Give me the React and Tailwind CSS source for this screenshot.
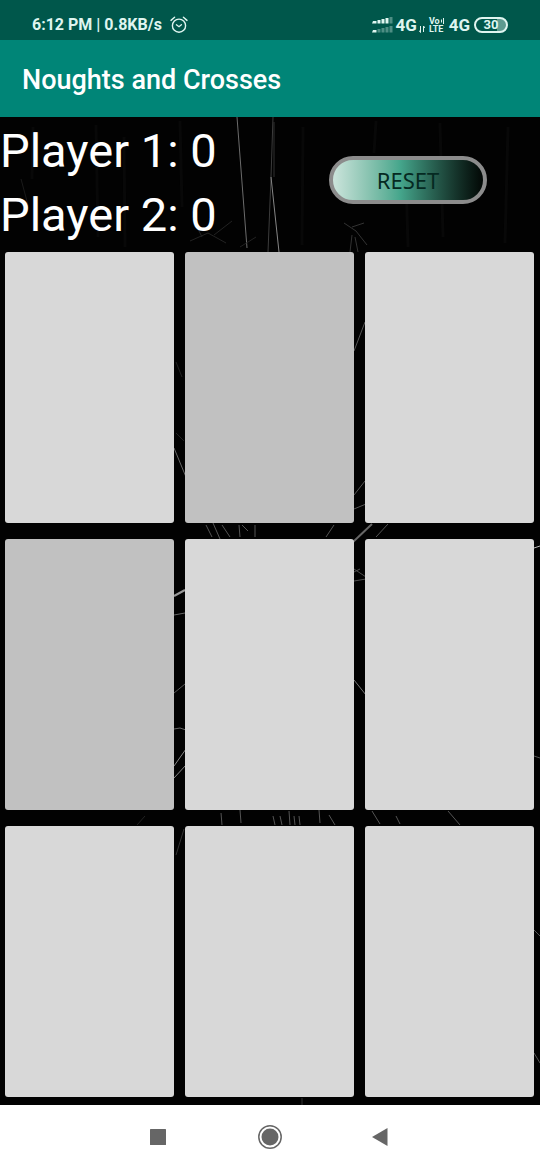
import React, { useState } from "react";

const BRANCHES = [
  ["M237 0 L247 131", "#6c6c6c", 1],
  ["M273 0 L271 60 L268 135", "#3c3c3c", 1],
  ["M271 60 L279 135", "#858585", 1],
  ["M274 5 L274 60", "#303030", 1],
  ["M344 106 L356 114 L367 128 M352 110 L364 106 M352 118 L350 135 M355 120 L358 135", "#333333", 1],
  ["M21 62 L28 88 L25 96", "#1a1a1a", 1],
  ["M190 124 L208 116 L226 126 M202 120 L196 108 M214 118 L232 104 M240 130 L256 120", "#222222", 1],
  ["M174 331 L186 360", "#666666", 1],
  ["M176 245 L182 260 M176 316 L184 324", "#222222", 1],
  ["M354 234 L365 205", "#555555", 1],
  ["M354 378 L365 364 M354 392 L366 387", "#555555", 1],
  ["M353 425 L372 407", "#666666", 2],
  ["M376 420 L388 407 M326 420 L334 408", "#555555", 1],
  ["M206 408 L212 420 M213 406 L220 422 M222 408 L230 420 M239 408 L240 420 M242 408 L248 414 M255 408 L255 420", "#555555", 1],
  ["M174 479 L185 473", "#999999", 2],
  ["M174 498 L185 496", "#666666", 1],
  ["M354 455 L360 452 M354 452 L366 460 M354 464 L366 462", "#505050", 1],
  ["M174 576 L185 567", "#555555", 1],
  ["M354 563 L366 578", "#777777", 1],
  ["M174 612 L180 611 L186 613", "#666666", 1],
  ["M174 649 L186 632 M174 661 L186 648", "#888888", 1],
  ["M221 696 L222 708 M240 693 L241 706 M273 699 L275 708 M280 699 L282 708 M289 694 L290 708 M294 699 L295 708 M299 699 L300 708 M319 693 L320 706 M329 698 L335 708", "#555555", 1],
  ["M372 694 L380 707 M396 699 L400 707 M448 694 L460 708", "#555555", 1],
  ["M176 738 L184 712", "#333333", 1],
  ["M145 699 L137 708", "#222222", 1],
  ["M534 431 L540 429", "#bbbbbb", 1],
  ["M534 639 L540 641 M534 813 L540 819 M534 936 L540 946", "#555555", 1],
  ["M302 981 L302 988", "#333333", 1],
  ["M33 10 L32 62 M96 8 L98 120 M124 20 L125 130 M180 4 L182 90 M303 10 L302 128 M376 4 L374 36 M406 60 L408 130 M440 6 L443 120 M508 10 L505 126", "#080808", 3],
];

function Backdrop() {
  return (
    <svg
      aria-hidden="true"
      className="absolute inset-0 h-full w-full"
      viewBox="0 0 540 988"
      preserveAspectRatio="none"
      fill="none"
    >
      {BRANCHES.map(([d, stroke, width]) => (
        <path key={d} d={d} stroke={stroke} strokeWidth={width} />
      ))}
    </svg>
  );
}

function AlarmIcon() {
  return (
    <svg className="ml-2 h-[18px] w-[18px]" viewBox="0 0 18 18" fill="none" stroke="currentColor" strokeWidth="1.4" strokeLinecap="round" aria-label="Alarm set">
      <circle cx="9" cy="9.7" r="6.6" />
      <path d="M1 4.4 4.6 1.3M17 4.4 13.4 1.3M6.4 8.8 9 10.7 11.4 8.8" />
    </svg>
  );
}

function SignalIcon() {
  return (
    <svg className="h-[17px] w-[22px]" viewBox="0 0 22 17" fill="currentColor" aria-label="Signal strength">
      <path d="M0 6.500 1 4h3.500v2.500zM5.500 3h3v3.500h-3zM9.500 2h3v4.500h-3zM13.500 1h3v5.500h-3zM0 15.500 1 13h3.500v2.500z" />
      <path opacity=".35" d="M17.500 0h3v6.500h-3zM5.500 12h3v3.500h-3zM9.500 11h3v4.500h-3zM13.500 10h3v5.500h-3zM17.500 9h3v6.500h-3z" />
    </svg>
  );
}

function StatusBar() {
  return (
    <div className="flex h-10 items-center justify-between bg-[#00574b] pt-[10px] pr-8 pl-8 text-[#dff5f0]">
      <div className="flex items-center text-[16px] leading-5 font-bold">
        <span>6:12 PM | 0.8KB/s</span>
        <AlarmIcon />
      </div>
      <div className="flex items-center text-[17px] leading-5 font-bold">
        <SignalIcon />
        <span className="ml-[2px]">4G</span>
        <svg className="ml-[2px] h-[17px] w-[6px]" viewBox="0 0 6 17" fill="none" stroke="currentColor" aria-hidden="true">
          <path d="M1.500 9v6.500L0 13.500M4.500 15V9L6 11" />
        </svg>
        <span className="ml-1 flex flex-col text-[9px] leading-2 font-bold">
          <span className="flex">
            Vo
            <svg className="h-2 w-[5px]" viewBox="0 0 5 8" fill="none" stroke="currentColor" aria-hidden="true">
              <path d="M1.500 2.500v3M3.500 1v6" />
            </svg>
          </span>
          <span>LTE</span>
        </span>
        <span className="ml-1">4G</span>
        <span className="ml-1 flex h-4 w-[34px] items-center justify-center rounded-full border-2 border-[#dff5f0] bg-linear-to-r from-[#00574b] from-70% to-[#5d9a90] to-70% text-[13px] leading-4 font-bold">
          30
        </span>
      </div>
    </div>
  );
}

function NavigationBar() {
  return (
    <nav className="flex h-[65px] items-center justify-center gap-[84px] bg-white pb-[2px] text-[#666666]">
      <button type="button" aria-label="Recent apps" className="flex w-7 justify-center">
        <svg className="size-4" viewBox="0 0 16 16" fill="currentColor"><rect width="16" height="16" rx="0.500" /></svg>
      </button>
      <button type="button" aria-label="Home" className="flex w-7 justify-center">
        <svg className="size-6" viewBox="0 0 24 24">
          <circle cx="12" cy="12" r="11.200" fill="none" stroke="currentColor" strokeWidth="1.500" />
          <circle cx="12" cy="12" r="8.500" fill="currentColor" />
        </svg>
      </button>
      <button type="button" aria-label="Back" className="flex w-7 justify-center">
        <svg className="h-[18px] w-5" viewBox="0 0 20 18" fill="currentColor"><path d="M15.500 0v18L0 9z" /></svg>
      </button>
    </nav>
  );
}

const SHADED = [1, 3];

export default function App() {
  const [marks, setMarks] = useState(Array(9).fill(""));
  const [turn, setTurn] = useState("O");

  const play = (index) => {
    if (marks[index]) return;
    setMarks(marks.map((mark, i) => (i === index ? turn : mark)));
    setTurn(turn === "O" ? "X" : "O");
  };

  const reset = () => {
    setMarks(Array(9).fill(""));
    setTurn("O");
  };

  return (
    <div className="flex min-h-screen flex-col bg-black font-[Roboto,sans-serif]">
      <StatusBar />
      <header className="flex h-[77px] items-center bg-[#008577] px-[22px] pt-[2px]">
        <h1 className="text-[27px] leading-8 font-medium text-white">Noughts and Crosses</h1>
      </header>
      <main className="relative flex flex-1 flex-col bg-[#020202]">
        <Backdrop />
        <section className="relative grid grid-cols-2 pt-[2px] pb-[5px]">
          <div className="text-[47px] leading-16 text-white">
            <p>Player 1: 0</p>
            <p>Player 2: 0</p>
          </div>
          <div className="flex items-center justify-center pb-[6px] pl-[6px]">
            <button
              type="button"
              onClick={reset}
              className="h-12 w-[158px] rounded-full border-4 border-[#8c8c8c] bg-linear-to-r from-[#d3e8e1] via-[#45a68c] via-45% to-[#020403] bg-origin-border font-['Noto_Sans',sans-serif] text-[22px] leading-6 text-[#052a22]"
            >
              RESET
            </button>
          </div>
        </section>
        <section aria-label="Board" className="relative mr-[6px] mb-2 ml-[5px] grid flex-1 grid-cols-3 grid-rows-3 gap-x-[11px] gap-y-4">
          {marks.map((mark, index) => (
            <button
              key={index}
              type="button"
              aria-label={`Square ${index + 1}`}
              onClick={() => play(index)}
              className={`rounded-[3px] text-6xl text-black ${SHADED.includes(index) ? "bg-[#c1c1c1]" : "bg-[#d8d8d8]"}`}
            >
              {mark}
            </button>
          ))}
        </section>
      </main>
      <NavigationBar />
    </div>
  );
}
